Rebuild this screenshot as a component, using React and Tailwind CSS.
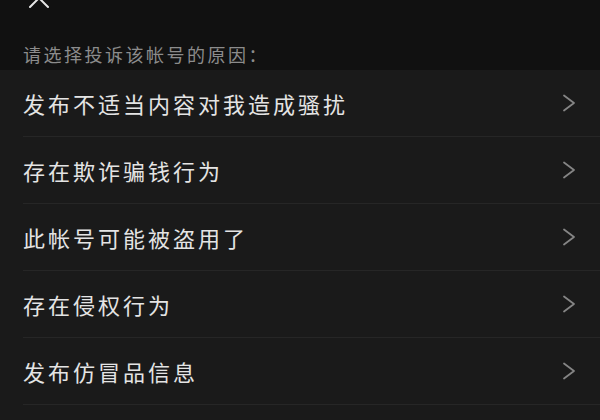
const reasons = [
  '发布不适当内容对我造成骚扰',
  '存在欺诈骗钱行为',
  '此帐号可能被盗用了',
  '存在侵权行为',
  '发布仿冒品信息',
]

const font = { fontFamily: '"Noto Sans CJK SC", "Noto Sans", sans-serif' }

function Chevron() {
  return (
    <svg width="14" height="18" viewBox="0 0 14 18" fill="none" stroke="#858585" strokeWidth="1.8" strokeLinecap="round" strokeLinejoin="round">
      <path d="M2 1.5 L12 9 L2 16.5" />
    </svg>
  )
}

export default function App() {
  return (
    <div className="h-[420px] w-[600px] overflow-hidden bg-[#1a1a1a]" style={font}>
      <div className="relative h-[70px] bg-[#111111]">
        <svg
          className="absolute left-[28px] top-[-13px]"
          width="22"
          height="22"
          viewBox="0 0 22 22"
          fill="none"
          stroke="#e6e6e6"
          strokeWidth="2"
          strokeLinecap="round"
        >
          <path d="M2 2 L20 20 M20 2 L2 20" />
        </svg>
        <p className="absolute left-[23px] top-[42px] text-[18px] leading-6 tracking-[2.5px] text-[#8c8c8c]">
          请选择投诉该帐号的原因：
        </p>
      </div>
      <ul>
        {reasons.map((r) => (
          <li key={r} className="ml-[23px] flex h-[67px] items-center justify-between border-b border-[#262626] pr-[24px]">
            <span className="text-[22px] tracking-[3px] text-[#e4e4e4]">{r}</span>
            <Chevron />
          </li>
        ))}
      </ul>
    </div>
  )
}
